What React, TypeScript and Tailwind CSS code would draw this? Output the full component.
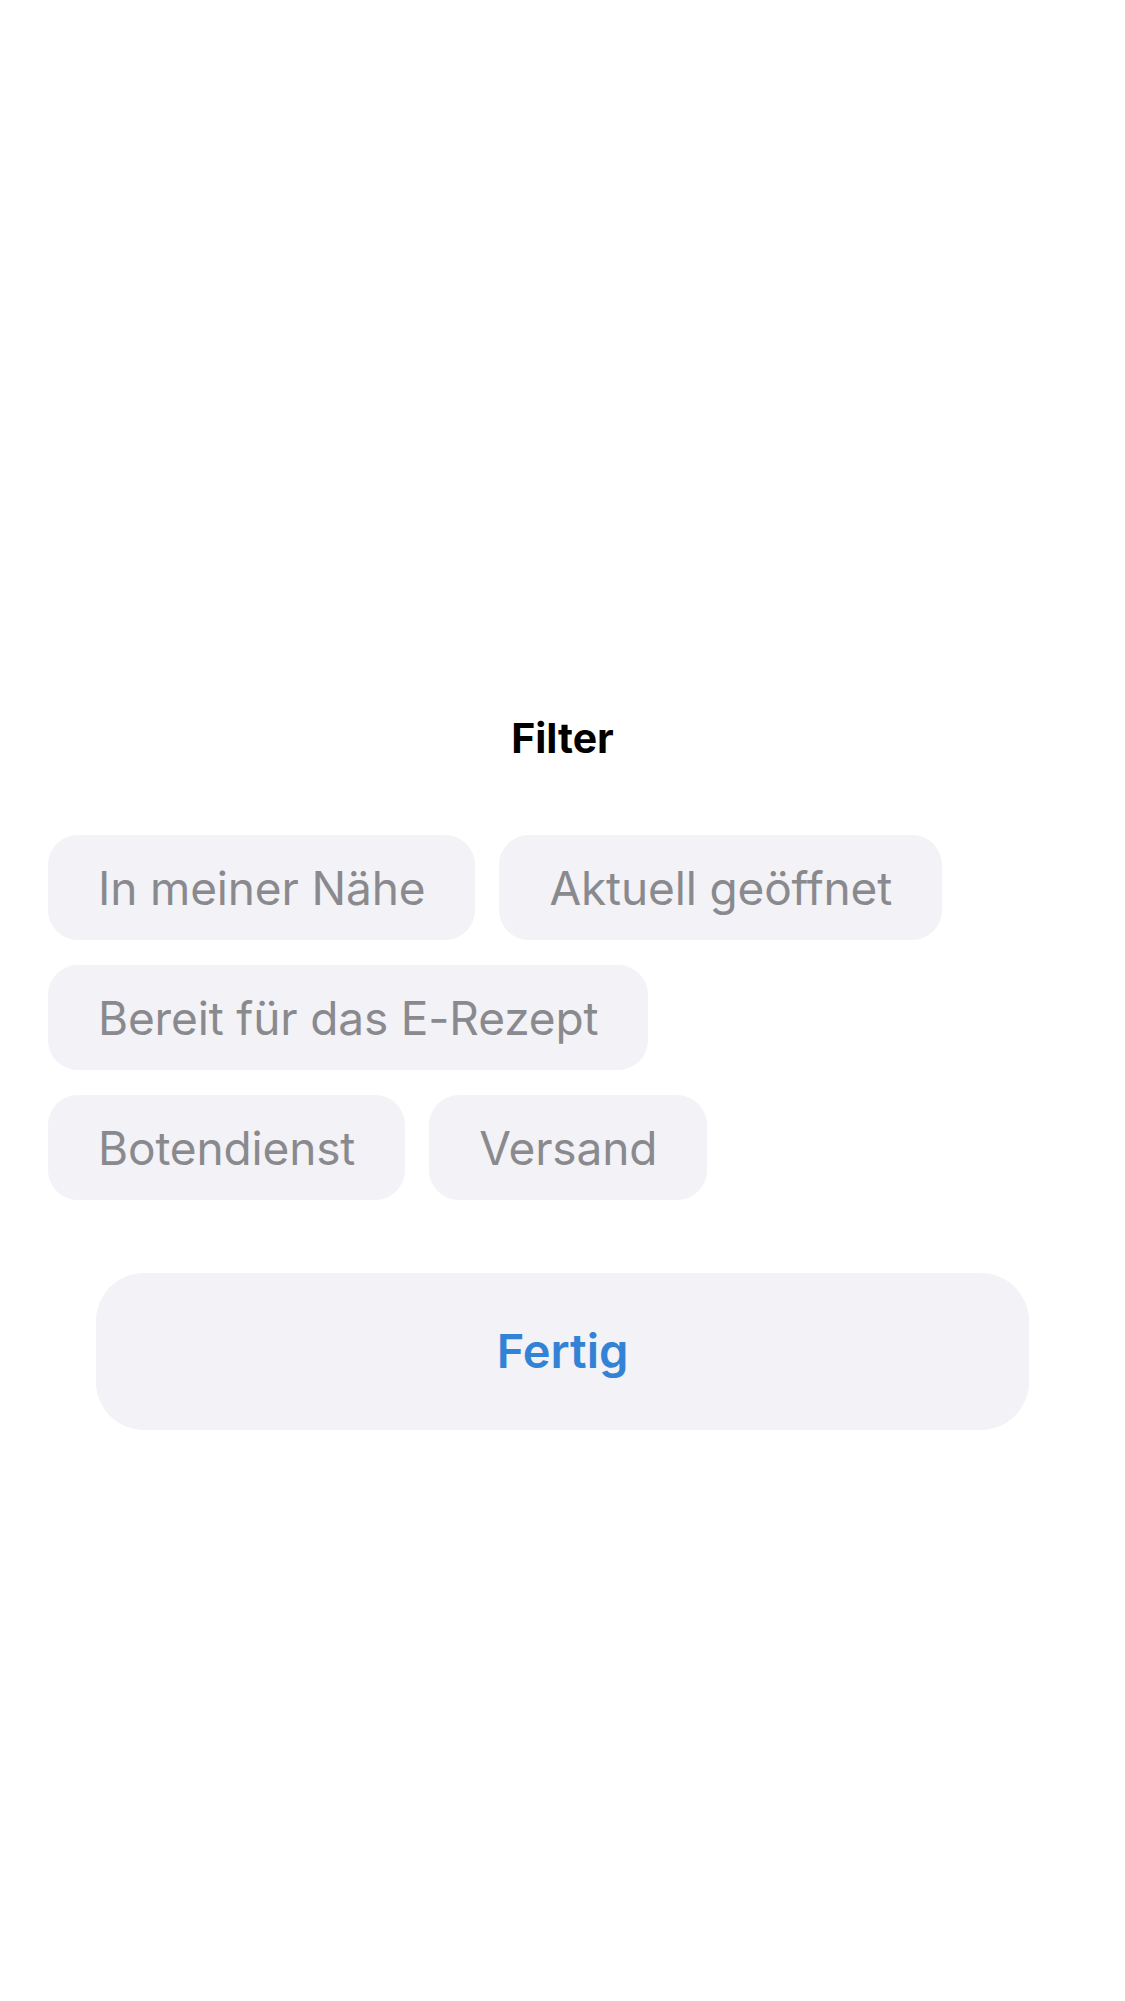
import React from 'react';

const rows = [
  ['In meiner Nähe', 'Aktuell geöffnet'],
  ['Bereit für das E-Rezept'],
  ['Botendienst', 'Versand'],
];

const FilterChip: React.FC<{ label: string }> = ({ label }) => (
  <button className="flex h-[105px] items-center rounded-[30px] bg-[#f2f2f7] px-[50px] text-[46px] leading-none tracking-[-0.15px] text-[#8a8a8e]">
    {label}
  </button>
);

export default function App() {
  return (
    <div className="h-[2001px] w-[1125px] bg-white font-['Inter','Noto_Sans',sans-serif]">
      <div className="px-[48px] pt-[713px]">
        <h2 className="text-center text-[41px] font-bold leading-[50px] text-black">Filter</h2>
        <div className="mt-[72px] flex flex-col gap-[25px]">
          {rows.map((row, i) => (
            <div className="flex gap-[24px]" key={i}>
              {row.map((label) => (
                <FilterChip key={label} label={label} />
              ))}
            </div>
          ))}
        </div>
        <button className="mx-[48px] mt-[73px] flex h-[157px] w-[933px] items-center justify-center rounded-[48px] bg-[#f2f2f7] text-[47px] font-semibold text-[#3283d5]">
          Fertig
        </button>
      </div>
    </div>
  );
}
